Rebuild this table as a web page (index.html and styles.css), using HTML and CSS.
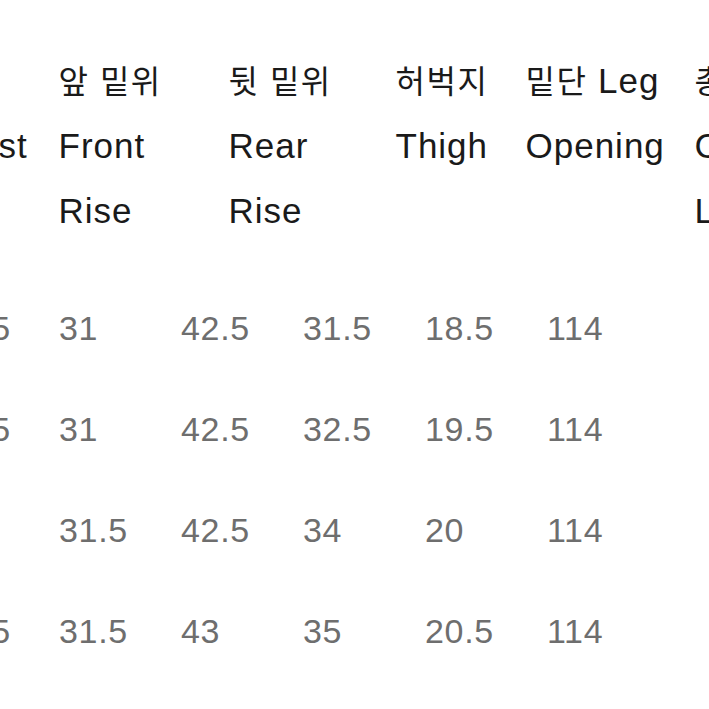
FILE: index.html
```html
<!DOCTYPE html>
<html lang="ko">
<head>
<meta charset="utf-8">
<title>Size table</title>
<link rel="stylesheet" href="styles.css">
</head>
<body>
<div class="sheet">
  <div class="head">
    <div class="hcell"><span class="ko">허리</span><br>Waist<br>&nbsp;</div>
    <div class="hcell"><span class="ko">앞 밑위</span><br>Front<br>Rise</div>
    <div class="hcell"><span class="ko">뒷 밑위</span><br>Rear<br>Rise</div>
    <div class="hcell"><span class="ko">허벅지</span><br>Thigh<br>&nbsp;</div>
    <div class="hcell"><span class="ko">밑단</span> Leg<br>Opening<br>&nbsp;</div>
    <div class="hcell"><span class="ko">총장</span><br>Cut<br>Length</div>
  </div>
  <div class="body-rows">
    <div class="row"><span>41.5</span><span>31</span><span>42.5</span><span>31.5</span><span>18.5</span><span>114</span></div>
    <div class="row"><span>43.5</span><span>31</span><span>42.5</span><span>32.5</span><span>19.5</span><span>114</span></div>
    <div class="row"><span>46</span><span>31.5</span><span>42.5</span><span>34</span><span>20</span><span>114</span></div>
    <div class="row"><span>48.5</span><span>31.5</span><span>43</span><span>35</span><span>20.5</span><span>114</span></div>
  </div>
</div>
</body>
</html>
```

FILE: styles.css
```css
html, body {
  margin: 0;
  padding: 0;
  background: #ffffff;
  overflow: hidden;
  width: 709px;
  height: 709px;
}

.sheet {
  font-family: "Liberation Sans", Arial, "Noto Sans CJK KR", sans-serif;
  white-space: nowrap;
}

.head {
  display: grid;
  grid-template-columns: 122px 170px 167px 130px 169px 200px;
  margin-top: 47px;
  margin-left: -63.5px;
  font-size: 35px;
  line-height: 65px;
  letter-spacing: 1px;
  color: #1a1a1a;
}

.ko {
  font-family: "Noto Sans CJK KR", sans-serif;
  font-size: 32px;
  letter-spacing: 1.5px;
}

.body-rows {
  margin-top: 35px;
  margin-left: -58px;
  font-size: 34px;
  line-height: 101px;
  letter-spacing: 0.7px;
  color: #6e6e6e;
}

.row {
  display: grid;
  grid-template-columns: 117px repeat(5, 122px);
}
```
